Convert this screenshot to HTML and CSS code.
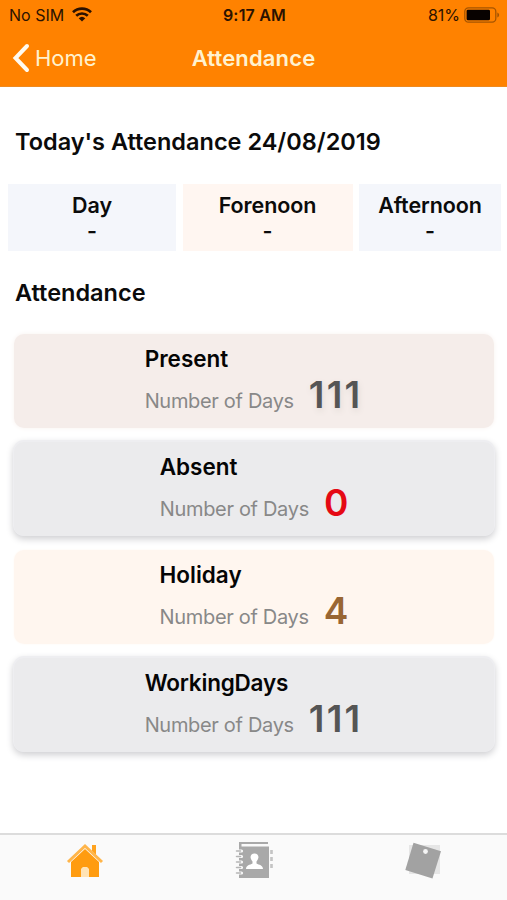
FILE: index.html
```html
<!DOCTYPE html>
<html lang="en">
<head>
<meta charset="utf-8">
<title>Attendance</title>
<link rel="stylesheet" href="styles.css">
</head>
<body>
<header class="header">
  <div class="status">
    <div class="status-left"><span class="carrier">No SIM</span>
      <svg class="wifi" width="20" height="15" viewBox="0 0 20 15" fill="none" stroke="#2b1200" stroke-width="2.7"><path d="M1 5.2a13 13 0 0 1 18 0M4.200 8.800a8.400 8.400 0 0 1 11.600 0"/><path d="M6.700 11.200a4.800 4.800 0 0 1 6.600 0L10 14.500z" fill="#2b1200" stroke="none"/></svg>
    </div>
    <span class="time">9:17 AM</span>
    <div class="status-right"><span class="percent">81%</span>
      <svg width="36" height="16" viewBox="0 0 36 16"><rect x=".8" y=".8" width="31" height="14.4" rx="3.6" fill="none" stroke="#a65500" stroke-width="1.3"/><rect x="2.6" y="2.7" width="23.4" height="10.6" rx="1.4" fill="#080200"/><path d="M33.3 5.5c2.4.7 2.4 4.3 0 5z" fill="#a65500"/></svg>
    </div>
  </div>
  <nav class="nav">
    <a class="back"><svg width="18" height="30" viewBox="0 0 18 30" fill="none" stroke="#fffaf0" stroke-width="4" stroke-linecap="round"><path d="M15 3 3.500 15 15 27"/></svg><span class="back-label">Home</span></a>
    <h1 class="nav-title">Attendance</h1>
  </nav>
</header>
<main class="content">
  <h2 class="heading today">Today's Attendance 24/08/2019</h2>
  <section class="sessions">
    <div class="session"><span class="day">Day</span><span>-</span></div>
    <div class="session warm"><span>Forenoon</span><span>-</span></div>
    <div class="session"><span class="afternoon">Afternoon</span><span>-</span></div>
  </section>
  <h2 class="heading summary">Attendance</h2>
  <section class="cards">
    <article class="card present"><div><h3>Present</h3><p><span class="label">Number of Days</span><strong class="wide">111</strong></p></div></article>
    <article class="card raised"><div><h3>Absent</h3><p><span class="label">Number of Days</span><strong class="red">0</strong></p></div></article>
    <article class="card holiday"><div><h3>Holiday</h3><p><span class="label">Number of Days</span><strong class="brown">4</strong></p></div></article>
    <article class="card raised"><div><h3 class="tight">WorkingDays</h3><p><span class="label">Number of Days</span><strong class="wide">111</strong></p></div></article>
  </section>
</main>
<footer class="tabs">
  <a class="tab"><svg width="38" height="38" viewBox="0 0 38 38"><path d="M26 3h4v10l-4-4z" fill="#ffa31f"/><path d="M5 20 19 7l14 13v15H23v-6a4 4 0 0 0-8 0v6H5z" fill="#ff9c10"/><path d="M2 20 19 4l17 16" fill="none" stroke="#ffb54a" stroke-width="3"/><path d="M15 35v-6a4 4 0 0 1 8 0v6z" fill="#ffe3b5"/></svg></a>
  <a class="tab"><svg width="38" height="38" viewBox="0 0 38 38"><path d="M4 0h29v2H6.500v2.500H34V36H4z" fill="#a9a9a9"/><path d="M1.500 9h5M1.500 14.500h5M1.500 20h5M1.500 25.500h5M1.500 31h5" stroke="#fafafa" stroke-width="3.200" stroke-linecap="round"/><path d="M1.500 9h4M1.500 14.500h4M1.500 20h4M1.500 25.500h4M1.500 31h4" stroke="#b5b5b5" stroke-width="1.500" stroke-linecap="round"/><path d="M36.500 8v4M36.500 15v4M36.500 22v4" stroke="#c4c4c4" stroke-width="2.600"/><path d="M11 27c0-4 4-4 6.500-5.500v-2c-3.500-4-2-8 2-8s5.500 4 2 8v2C24 23 28 23 28 27z" fill="#fff"/></svg></a>
  <a class="tab"><svg width="38" height="38" viewBox="0 0 38 38"><path d="M5 3h31v29H5z" fill="#e6e6e6"/><path d="m9.500.8 27.500 8.400-8.500 27.300L1.300 28z" fill="#a2a2a2"/><circle cx="21.500" cy="9.500" r="2.400" fill="#f5f5f5"/></svg></a>
</footer>
</body>
</html>
```

FILE: styles.css
```css
* { box-sizing: border-box; margin: 0; padding: 0; }
body { width: 507px; height: 900px; display: flex; flex-direction: column; background: #fff; color: #0b0b0b; font-family: Inter, sans-serif; overflow: hidden; }
.header { height: 87px; background: #ff8200; border-bottom: 1px solid #ee8a20; }
.status { height: 30px; padding: 0 7px 0 9px; display: grid; grid-template-columns: 1fr auto 1fr; align-items: center; font-size: 16px; line-height: 30px; color: #2b1200; }
.status-left, .status-right { display: flex; align-items: center; }
.status-left { gap: 8px; }
.wifi { margin-top: -2px; }
.status-right { justify-content: flex-end; gap: 4px; }
.time { font-weight: 600; letter-spacing: .2px; }
.nav { height: 56px; padding: 0 12px; display: grid; grid-template-columns: 1fr auto 1fr; align-items: center; color: #fff2cf; }
.back { display: flex; align-items: center; gap: 5px; font-size: 22px; }
.nav-title { font-size: 22px; font-weight: 600; letter-spacing: .15px; }
.content { flex: 1; }
.heading { padding-left: 15px; font-size: 23.5px; font-weight: 600; line-height: 30px; }
.today { margin-top: 40px; }
.sessions { margin: 27px 6px 0 8px; display: grid; grid-template-columns: 168px 170px 142px; column-gap: 6.5px; }
.session { height: 67px; padding-top: 8px; display: flex; flex-direction: column; align-items: center; background: #f4f6fb; font-size: 21.5px; font-weight: 600; line-height: 26px; letter-spacing: -.1px; }
.warm { background: #fff6f1; }
.summary { margin-top: 27px; }
.cards { margin: 26px 13px 0 14px; display: grid; row-gap: 14px; }
.card { height: 94px; display: flex; justify-content: center; border-radius: 10px; }
.card h3 { padding-top: 10px; font-size: 22.5px; font-weight: 600; line-height: 30px; color: #050505; }
.card .tight { letter-spacing: -.2px; }
.card p { height: 50px; display: flex; align-items: baseline; gap: 15px; line-height: 42px; }
.label { font-size: 20px; color: #888; letter-spacing: -.32px; }
.card strong { font-size: 37px; font-weight: 600; color: #555; }
.card .wide { margin-right: 1px; letter-spacing: 2.2px; }
.card .red { color: #e50914; }
.card .brown { color: #996633; }
.present { background: #f5edea; box-shadow: 0 0 5px #f8f2ef; }
.present strong { text-shadow: 1px 3px 6px #e2dad6; }
.holiday { background: #fff6ef; box-shadow: 0 0 3px #fff9f4; }
.raised { background: #ebebed; box-shadow: 0 -1px 0 1px #eeeef1, 0 2px 7px 1px #cfcfd2; }
.tabs { height: 67px; padding-top: 7px; display: grid; grid-template-columns: repeat(3, 1fr); justify-items: center; background: #fafafa; border-top: 2px solid #dcdcdc; }
```
